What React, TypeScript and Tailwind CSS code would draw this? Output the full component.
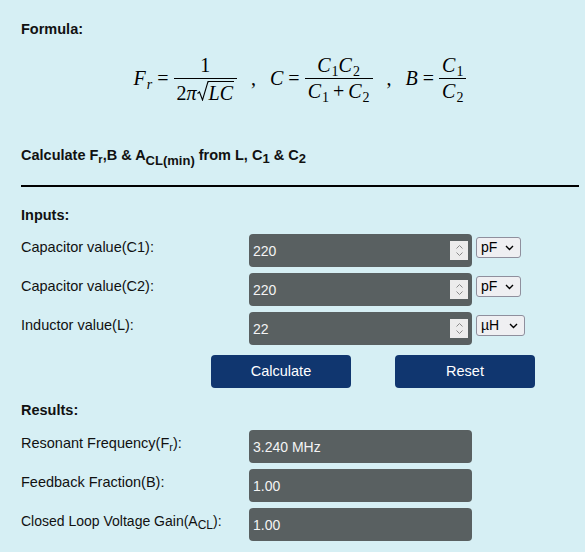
import React from "react";

const inputs = [
  { label: "Capacitor value(C1):", value: "220", unit: "pF", unitW: "w-[45px]" },
  { label: "Capacitor value(C2):", value: "220", unit: "pF", unitW: "w-[45px]" },
  { label: "Inductor value(L):", value: "22", unit: "µH", unitW: "w-[49px]" },
];

function Frac({ num, den }: { num: React.ReactNode; den: React.ReactNode }) {
  return (
    <span className="inline-flex flex-col items-center leading-none">
      <span className="flex h-[23px] items-end px-[3px] pb-[3px]">{num}</span>
      <span className="h-px w-full bg-black" />
      <span className="flex h-[23px] items-start px-[3px] pt-[2px]">{den}</span>
    </span>
  );
}

function V({ children, sub, italicSub }: { children: React.ReactNode; sub?: string; italicSub?: boolean }) {
  return (
    <span className="italic">
      {children}
      {sub && (
        <span className={`${italicSub ? "italic" : "not-italic"} relative top-[4px] ml-[1px] text-[14px]`}>{sub}</span>
      )}
    </span>
  );
}

function Sqrt({ children }: { children: React.ReactNode }) {
  return (
    <span className="inline-flex items-stretch">
      <svg width="12" height="20" viewBox="0 0 12 20" className="block">
        <path d="M0.5 12.5 L2.5 11 L5.5 19 L11 0.6 L12 0.6" fill="none" stroke="black" strokeWidth="1.1" />
      </svg>
      <span className="border-t border-black pt-[1px] pr-[1px]">{children}</span>
    </span>
  );
}

function Spinner() {
  return (
    <div className="absolute right-[4px] top-[7px] flex h-[19px] w-[18px] flex-col items-center justify-center gap-[3px] bg-[#ececec]">
      <svg width="7" height="4" viewBox="0 0 7 4">
        <path d="M0.5 3.5 L3.5 0.5 L6.5 3.5" fill="none" stroke="#8a8a8a" strokeWidth="1" />
      </svg>
      <svg width="7" height="4" viewBox="0 0 7 4">
        <path d="M0.5 0.5 L3.5 3.5 L6.5 0.5" fill="none" stroke="#8a8a8a" strokeWidth="1" />
      </svg>
    </div>
  );
}

function UnitSelect({ unit, w }: { unit: string; w: string }) {
  return (
    <div
      className={`mt-[3px] flex h-[21px] ${w} items-center justify-between rounded-[3px] border border-[#8f8f9d] bg-[#efeff2] pl-[4px] pr-[6px] text-[14px] text-black`}
    >
      <span>{unit}</span>
      <svg width="9" height="6" viewBox="0 0 9 6">
        <path d="M1 1 L4.5 4.5 L8 1" fill="none" stroke="black" strokeWidth="1.4" />
      </svg>
    </div>
  );
}

function Box({ value, spinner }: { value: string; spinner?: boolean }) {
  return (
    <div className="relative h-[33px] w-[223px] rounded-[4px] bg-[#596061]">
      <input
        readOnly
        value={value}
        className="h-full w-full bg-transparent pl-[4px] text-[14px] text-[#f4f4f4] outline-none"
      />
      {spinner && <Spinner />}
    </div>
  );
}

export default function App() {
  return (
    <div className="min-h-screen w-full bg-[#d6eff4] pl-[21px] pr-[6px] pt-[21px] pb-[11px] font-['Liberation_Sans',Arial,sans-serif] text-[#111]">
      <div className="text-[14.5px] font-bold leading-[16px]">Formula:</div>

      <div className="mt-[16px] flex h-[50px] items-center justify-center font-['Liberation_Serif',serif] text-[20px] text-black">
        <V sub="r" italicSub>
          F
        </V>
        <span className="mx-[5px]">=</span>
        <Frac
          num="1"
          den={
            <span className="inline-flex items-end">
              <span>2</span>
              <span className="italic">π</span>
              <Sqrt>
                <span className="italic">LC</span>
              </Sqrt>
            </span>
          }
        />
        <span className="mx-[14px]">,</span>
        <V>C</V>
        <span className="mx-[5px]">=</span>
        <Frac
          num={
            <span>
              <V sub="1">C</V>
              <V sub="2">C</V>
            </span>
          }
          den={
            <span>
              <V sub="1">C</V>
              <span className="mx-[4px]">+</span>
              <V sub="2">C</V>
            </span>
          }
        />
        <span className="mx-[14px]">,</span>
        <V>B</V>
        <span className="mx-[5px]">=</span>
        <Frac num={<V sub="1">C</V>} den={<V sub="2">C</V>} />
      </div>

      <div className="mt-[44px] text-[14.5px] font-bold leading-[16px]">
        Calculate F<sub className="text-[11px]">r</sub>,B &amp; A
        <sub className="text-[13px] bottom-[-0.4em]">CL(min)</sub> from L, C
        <sub className="text-[13px]">1</sub> &amp; C<sub className="text-[13px]">2</sub>
      </div>

      <div className="mt-[22px] h-[2px] w-full bg-black" />

      <div className="mt-[20px] text-[14.5px] font-bold leading-[16px]">Inputs:</div>

      <div className="mt-[11px] flex flex-col gap-[6px]">
        {inputs.map((r) => (
          <div key={r.label} className="flex items-start">
            <div className="mt-[5px] w-[228px] text-[14.5px] leading-[16px]">{r.label}</div>
            <Box value={r.value} spinner />
            <div className="ml-[4px]">
              <UnitSelect unit={r.unit} w={r.unitW} />
            </div>
          </div>
        ))}
      </div>

      <div className="mt-[10px] flex gap-[44px] pl-[190px]">
        <button className="h-[33px] w-[140px] rounded-[4px] bg-[#10366f] text-[14.5px] text-white">Calculate</button>
        <button className="h-[33px] w-[140px] rounded-[4px] bg-[#10366f] text-[14.5px] text-white">Reset</button>
      </div>

      <div className="mt-[14px] text-[14.5px] font-bold leading-[16px]">Results:</div>

      <div className="mt-[12px] flex flex-col gap-[6px]">
        <div className="flex items-start">
          <div className="mt-[5px] w-[228px] text-[14.5px] leading-[16px]">
            Resonant Frequency(F<sub className="text-[11px]">r</sub>):
          </div>
          <Box value="3.240 MHz" />
        </div>
        <div className="flex items-start">
          <div className="mt-[5px] w-[228px] text-[14.5px] leading-[16px]">Feedback Fraction(B):</div>
          <Box value="1.00" />
        </div>
        <div className="flex items-start">
          <div className="mt-[5px] w-[228px] text-[14px] leading-[16px]">
            Closed Loop Voltage Gain(A<sub className="text-[12px]">CL</sub>):
          </div>
          <Box value="1.00" />
        </div>
      </div>
    </div>
  );
}
